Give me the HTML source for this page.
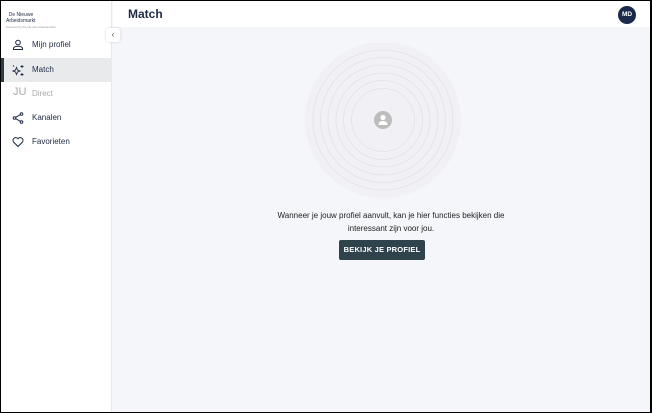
<!DOCTYPE html>
<html><head><style>
*{margin:0;padding:0;box-sizing:border-box}
body{width:652px;height:413px;overflow:hidden;font-family:"Liberation Sans",sans-serif;background:#000}
.frame{position:absolute;left:1px;top:1px;width:649px;height:411px;background:#f5f6fa;overflow:hidden}
.side{position:absolute;left:0;top:0;width:111px;height:411px;background:#fff;border-right:1px solid #e6e8ee}
.hdr{position:absolute;left:112px;top:0;right:0;height:26px;background:#fff}
.hdr h1{position:absolute;left:15px;top:6px;font-size:12px;font-weight:bold;color:#1d2a44}
.av{position:absolute;right:14px;top:5px;width:18px;height:18px;border-radius:50%;background:#1b2a4b;color:#fff;font-size:6.5px;font-weight:bold;text-align:center;line-height:18px}
.logo{position:absolute;left:5px;top:11px;font-size:5px;color:#1d2a44;line-height:6px}
.item{position:absolute;left:0;width:111px;height:24px;font-size:8px;color:#1d2a44}
.item span{position:absolute;left:31px;top:7px}
.item svg{position:absolute;left:11px;top:6px}
.act{background:#e9eaec;border-left:3px solid #2c3d45}
.tog{position:absolute;left:105px;top:27px;width:14px;height:14px;background:#fff;border-radius:3px;box-shadow:0 0 3px rgba(0,0,0,.15);font-size:8px;text-align:center;line-height:13px;color:#444;z-index:3}
.txt{position:absolute;left:240px;width:300px;text-align:center;font-size:8px;color:#222;line-height:13px;top:208px}
.btn{position:absolute;left:338px;top:239px;width:86px;height:20px;background:#2f434c;border-radius:2px;color:#fff;font-size:7.5px;font-weight:bold;text-align:center;line-height:20px;letter-spacing:.2px}
</style></head><body><div class="frame">
<div class="side">
<div class="logo">&nbsp;&nbsp;De Nieuwe<br>Arbeidsmarkt<br><span style="font-size:3px;color:#999">Powered by De Nieuwe Arbeidsmarkt</span></div>
<div class="item" style="top:32px"><svg width="12" height="12" viewBox="0 0 12 12" fill="none" stroke="#1d2a44" stroke-width="1"><circle cx="6" cy="3.5" r="2.3"/><path d="M1.5 10.5h9v-1.2c0-1.2-2-2-4.5-2s-4.5.8-4.5 2z"/></svg><span>Mijn profiel</span></div>
<div class="item act" style="top:57px"><svg width="13" height="13" viewBox="0 0 13 13" fill="none" stroke="#1d2a44" stroke-width="0.9" style="left:8px"><path d="M4.5 3.5l1 2.5 2.5 1-2.5 1-1 2.5-1-2.5-2.5-1 2.5-1z"/><path d="M10 1v3M8.5 2.5h3M10 9v3M8.5 10.5h3M1 1.5l1 1"/></svg><span style="left:28px">Match</span></div>
<div class="item" style="top:81px;color:#aaa"><span style="left:12px;top:4px;font-size:11px;color:#aaa">JU</span><span>Direct</span></div>
<div class="item" style="top:105px"><svg width="12" height="12" viewBox="0 0 12 12" fill="none" stroke="#1d2a44" stroke-width="1"><circle cx="9.5" cy="2" r="1.3"/><circle cx="2.5" cy="6" r="1.3"/><circle cx="9.5" cy="10" r="1.3"/><path d="M3.6 5.4l4.8-2.8M3.6 6.6l4.8 2.8"/></svg><span>Kanalen</span></div>
<div class="item" style="top:129px"><svg width="12" height="12" viewBox="0 0 12 12" fill="none" stroke="#1d2a44" stroke-width="1"><path d="M6 10.5L1.5 6A2.5 2.5 0 0 1 6 2.8 2.5 2.5 0 0 1 10.5 6z"/></svg><span>Favorieten</span></div>
</div>
<div class="tog">‹</div>
<div class="hdr"><h1>Match</h1><div class="av">MD</div></div>
<svg style="position:absolute;left:303px;top:42px" width="158" height="158" viewBox="0 0 158 158">
<circle cx="79" cy="77" r="78" fill="#eeeff1" opacity=".6"/>
<g fill="none" stroke="#e1e2e5" stroke-width="0.8">
<circle cx="79" cy="77" r="70"/><circle cx="79" cy="77" r="62.5"/><circle cx="79" cy="77" r="55"/><circle cx="79" cy="77" r="47"/><circle cx="79" cy="77" r="39.5"/><circle cx="79" cy="77" r="31.5"/></g>
<circle cx="79" cy="77" r="9" fill="#bdbdbf"/>
<circle cx="79" cy="74.5" r="2.6" fill="#fff"/><path d="M74.5 82c0-3 2-4 4.5-4s4.5 1 4.5 4z" fill="#fff"/>
</svg>
<div class="txt">Wanneer je jouw profiel aanvult, kan je hier functies bekijken die<br>interessant zijn voor jou.</div>
<div class="btn">BEKIJK JE PROFIEL</div>
</div></body></html>
